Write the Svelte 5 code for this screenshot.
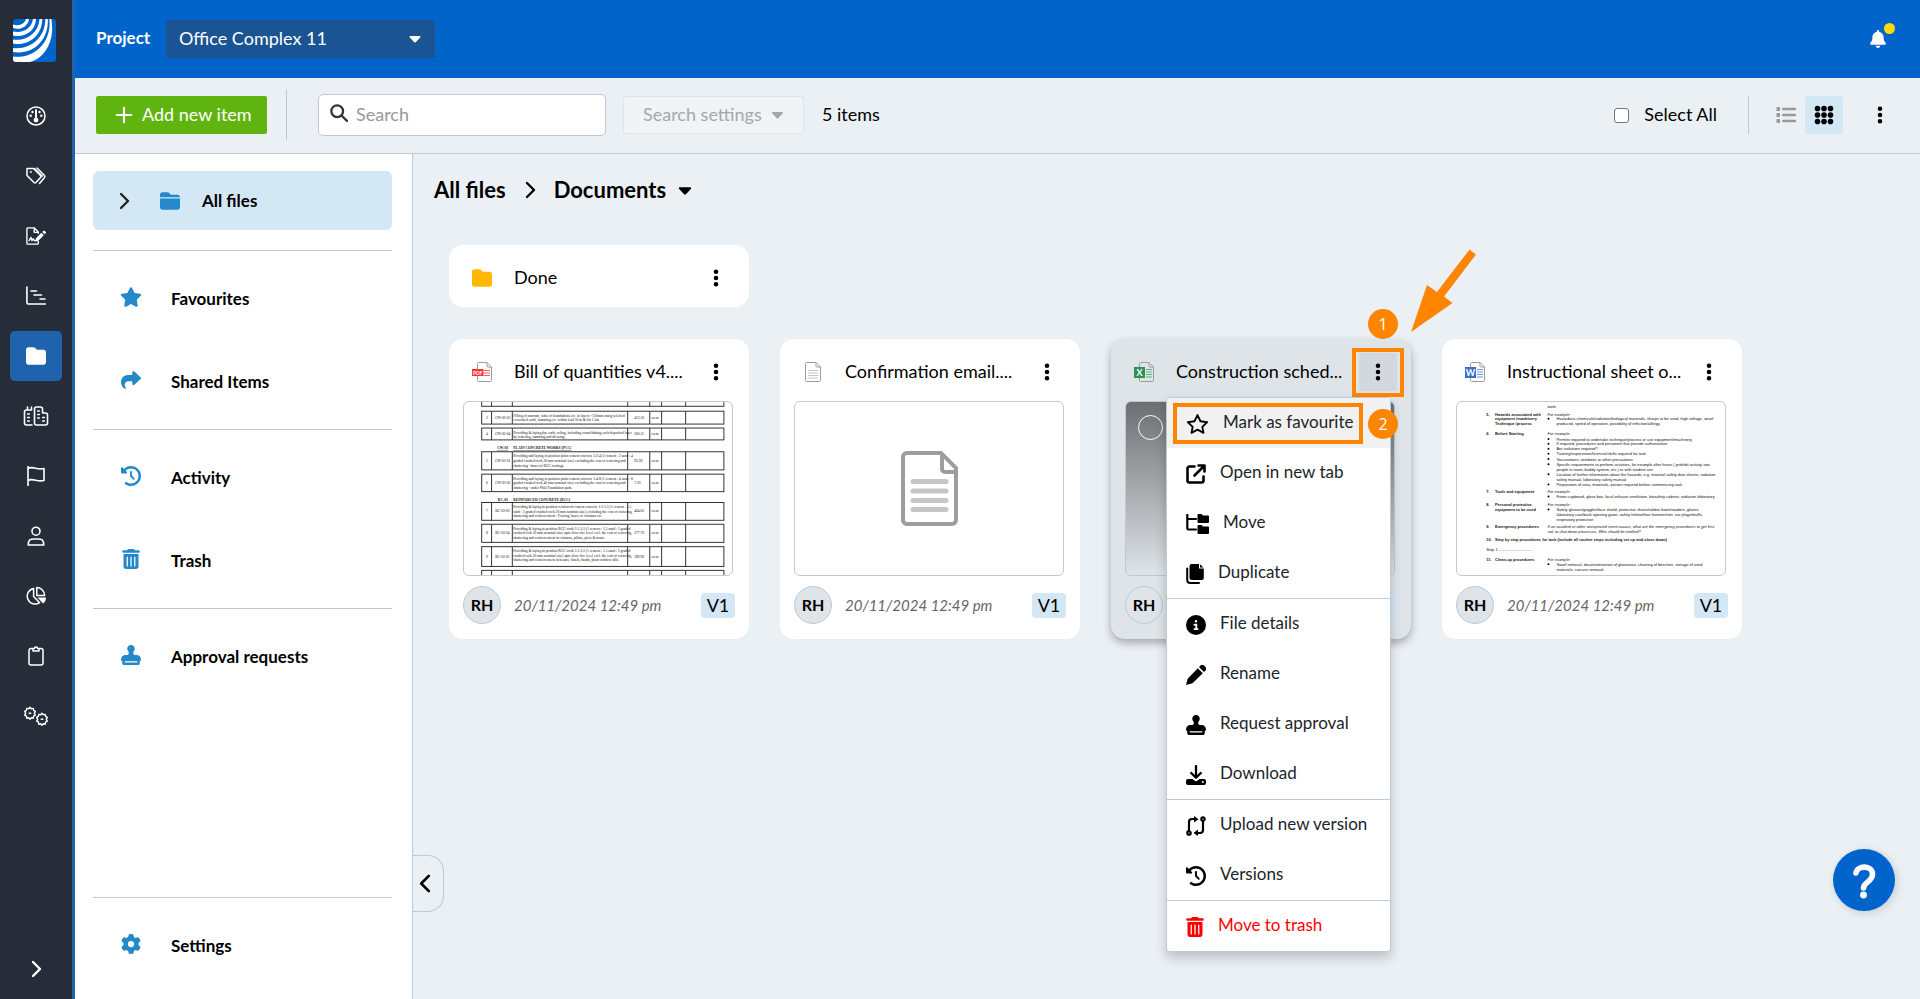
<script lang="ts">
  interface Icon {
    box: string;
    /** Filled outline. */
    fill?: string;
    /** Stroked outline. */
    line?: string;
    weight?: number;
  }

  const trash =
    "M135.2 17.7L128 32H32C14.3 32 0 46.3 0 64S14.3 96 32 96H416c17.7 0 32-14.3 32-32s-14.3-32-32-32H320l-7.2-14.3C307.4 6.8 296.3 0 284.2 0H163.8c-12.1 0-23.2 6.8-28.6 17.7zM416 128H32V448c0 35.3 28.7 64 64 64H352c35.3 0 64-28.7 64-64V128zM144 208V432c0 8.8-7.2 16-16 16s-16-7.2-16-16V208c0-8.8 7.2-16 16-16s16 7.2 16 16zm96 0V432c0 8.8-7.2 16-16 16s-16-7.2-16-16V208c0-8.8 7.2-16 16-16s16 7.2 16 16zm96 0V432c0 8.8-7.2 16-16 16s-16-7.2-16-16V208c0-8.8 7.2-16 16-16s16 7.2 16 16z";

  const icons: Record<string, Icon> = {
    gauge: {
      box: "0 0 20 20",
      line: "M10 1a9 9 0 1 1 0 18a9 9 0 0 1 0-18M10 4v9",
      weight: 1.5,
      fill: "M10 11.6a2.4 2.4 0 1 1 0 4.800a2.400 2.400 0 0 1 0-4.800zM9.100 3.500h1.800v9H9.100zM6.500 4.800a1.200 1.200 0 1 1 0 2.400a1.200 1.200 0 0 1 0-2.400zM13.500 4.800a1.200 1.200 0 1 1 0 2.400a1.200 1.200 0 0 1 0-2.400zM4.700 8.600a1.200 1.200 0 1 1 0 2.400a1.200 1.200 0 0 1 0-2.400zM15.300 8.600a1.200 1.200 0 1 1 0 2.400a1.200 1.200 0 0 1 0-2.400z",
    },
    tags: {
      box: "0 0 20 20",
      line: "M1 2.500h6.500l7 7a1.500 1.500 0 0 1 0 2l-4.500 5a1.500 1.500 0 0 1-2 0L1 9.500zM11 2l7.300 7.200a2 2 0 0 1 0 2.600L13.500 17.500M4.500 5.900h.8M8.500 2.500l7.800 7.600",
      weight: 1.5,
    },
    sign: {
      box: "0 0 22 20",
      line: "M13.500 16v2a1 1 0 0 1-1 1H2a1 1 0 0 1-1-1V2a1 1 0 0 1 1-1h7l4.500 4.500V7M9 1v5h4M3.500 15l2-3.500l1 3.500l1.500-2l1 2h3",
      weight: 1.5,
      fill: "M11 12.500l6-6l2.600 2.600l-6 6l-3.400.8zM18 5.500l1-1a1.200 1.200 0 0 1 1.700 0l.9.9a1.200 1.200 0 0 1 0 1.700l-1 1z",
    },
    gantt: {
      box: "0 0 20 20",
      line: "M.9 1v15.500a1.500 1.500 0 0 0 1.500 1.500H20M5 5h5.500M8 9h7.500M14 13h5",
      weight: 1.6,
    },
    folder: {
      box: "0 0 512 512",
      fill: "M64 480H448c35.300 0 64-28.700 64-64V160c0-35.300-28.700-64-64-64H288c-10.100 0-19.600-4.700-25.600-12.800L243.200 57.600C231.100 41.500 212.100 32 192 32H64C28.700 32 0 60.700 0 96V416c0 35.300 28.700 64 64 64z",
    },
    folderOpen: {
      box: "0 0 512 512",
      fill: "M0 160V96c0-35.300 28.700-64 64-64h128c20 0 39 9.500 51 25.600l19 25.600c6 8.100 15.500 12.800 25.600 12.800H448c35 0 64 28 64 64zM0 192H512V416c0 35-29 64-64 64H64c-35 0-64-29-64-64z",
    },
    city: {
      box: "0 0 25 20",
      line: "M8.500 19H3a2 2 0 0 1-2-2V6a2 2 0 0 1 2-2h5M4 4V1M8 4V1M11 17V3a2 2 0 0 1 2-2h4a2 2 0 0 1 2 2v4h3a2 2 0 0 1 2 2v8a2 2 0 0 1-2 2h-9a2 2 0 0 1-2-2zM4.200 8h1.600M4.200 11.500h1.600M4.200 15h1.600M14.200 5h1.600M14.200 8.500h1.600M14.200 12h1.600M19.200 11.500h1.600M19.200 15h1.600",
      weight: 1.6,
    },
    flag: {
      box: "0 0 20 20",
      line: "M2 0v20M2 2.500c5-3 9 2 16 0v12c-7 2-11-3-16 0",
      weight: 1.6,
    },
    person: {
      box: "0 0 20 20",
      line: "M10 1.200a4 4 0 1 1 0 8a4 4 0 0 1 0-8zM2.200 19c0-7 4-6 7.800-6s7.800-1 7.800 6z",
      weight: 1.6,
    },
    pie: {
      box: "0 0 21 20",
      line: "M8 2a8.300 8.300 0 1 0 6.300 15L8 10.500zM11.300 1v8.500h8.200c0-5-4-8.500-8.200-8.500z",
      weight: 1.6,
      fill: "M12 11.500h9c0 3-1.500 5-3 6.500z",
    },
    clipboard: {
      box: "0 0 20 20",
      line: "M7 2.500H5a2 2 0 0 0-2 2V17a2 2 0 0 0 2 2h10a2 2 0 0 0 2-2V4.500a2 2 0 0 0-2-2h-2M7 5V2.500h1.500a1.500 1.500 0 0 1 3 0H13V5z",
      weight: 1.5,
    },
    cogs: {
      box: "0 0 25 20",
      line: "M6.500 1.200l1.300 1.600l2-.4l.3 2l1.700 1l-1 1.900l1 1.900l-1.700 1l-.3 2l-2-.4l-1.300 1.600l-1.300-1.600l-2 .4l-.3-2l-1.700-1l1-1.900l-1-1.900l1.700-1l.3-2l2 .4zM18.500 7.200l1.300 1.600l2-.4l.3 2l1.700 1l-1 1.900l1 1.900l-1.700 1l-.3 2l-2-.4l-1.300 1.600l-1.300-1.600l-2 .4l-.3-2l-1.700-1l1-1.900l-1-1.900l1.700-1l.3-2l2 .4zM5.700 7.300h1.600M17.700 13.300h1.600",
      weight: 1.400,
    },
    right: { box: "0 0 20 20", line: "M7 3l7 7l-7 7", weight: 2.400 },
    left: { box: "0 0 20 20", line: "M14 2L6 10l8 8", weight: 2.800 },
    down: { box: "0 0 12 8", fill: "M1.500 1h9c.9 0 1.300 1 .7 1.600L7 7a1.400 1.400 0 0 1-2 0L.8 2.600C.2 2 .6 1 1.500 1z" },
    plus: { box: "0 0 20 20", line: "M10 2v16M2 10h16", weight: 2.400 },
    search: { box: "0 0 20 20", line: "M8 1.500a6.500 6.500 0 1 1 0 13a6.500 6.500 0 0 1 0-13M12.800 12.800L18.800 18.800", weight: 2.500 },
    bell: {
      box: "0 0 448 512",
      fill: "M224 0c-17.700 0-32 14.300-32 32V51.200C119 66 64 130.600 64 208v18.800c0 47-17.300 92.400-48.500 127.600l-7.400 8.300c-8.400 9.400-10.400 22.900-5.300 34.400S19.400 416 32 416H416c12.600 0 24-7.400 29.200-18.900s3.100-25-5.300-34.400l-7.400-8.300C401.300 319.200 384 273.900 384 226.800V208c0-77.400-55-142-128-156.800V32c0-17.700-14.300-32-32-32zm45.300 493.300c12-12 18.700-28.300 18.700-45.300H160c0 17 6.700 33.300 18.700 45.300s28.300 18.700 45.300 18.700s33.300-6.700 45.300-18.700z",
    },
    list: {
      box: "0 0 20 20",
      line: "M7.200 4H19M7.200 10H19M7.200 16H19",
      weight: 2.400,
      fill: "M1 2h2.500a.5.5 0 0 1 .5.5v3a.5.5 0 0 1-.5.5H1a.5.5 0 0 1-.5-.5v-3A.5.5 0 0 1 1 2zM1 8h2.500a.5.5 0 0 1 .5.5v3a.5.5 0 0 1-.5.5H1a.5.5 0 0 1-.5-.5v-3A.5.5 0 0 1 1 8zM1 14h2.500a.5.5 0 0 1 .5.5v3a.5.5 0 0 1-.5.5H1a.5.5 0 0 1-.5-.5v-3A.5.5 0 0 1 1 14z",
    },
    grid: {
      box: "0 0 20 20",
      line: "M3.500 3.500v.01M10 3.500v.01M16.500 3.500v.01M3.500 10v.01M10 10v.01M16.500 10v.01M3.500 16.500v.01M10 16.500v.01M16.500 16.500v.01",
      weight: 5.600,
    },
    kebab: { box: "0 0 20 20", line: "M10 3.800v.01M10 10v.01M10 16.200v.01", weight: 4.600 },
    star: {
      box: "0 0 576 512",
      fill: "M316.900 18C311.600 7 300.400 0 288.100 0s-23.400 7-28.800 18L195 150.300 51.400 171.500c-12 1.800-22 10.200-25.700 21.700s-.7 24.200 7.900 32.700L137.800 329 113.200 474.700c-2 12 3 24.200 12.900 31.300s23 8 33.800 2.300l128.300-68.500 128.300 68.500c10.800 5.700 23.900 4.900 33.800-2.300s14.900-19.300 12.900-31.300L438.500 329 542.700 225.900c8.600-8.500 11.700-21.200 7.900-32.700s-13.700-19.900-25.700-21.700L381.200 150.300 316.900 18z",
    },
    starLine: {
      box: "0 0 576 512",
      line: "M288 28l77 157 171 25-124 121 29 152-153-81-153 81 29-152L40 210l171-25z",
      weight: 48,
    },
    share: {
      box: "0 0 512 512",
      fill: "M307 34.800c-11.500 5.100-19 16.600-19 29.200v64H176C78.800 128 0 206.800 0 304C0 417.300 81.500 467.900 100.200 478.100c2.500 1.400 5.300 1.900 8.100 1.900c10.900 0 19.700-8.900 19.700-19.700c0-7.500-4.300-14.400-9.800-19.500C108.800 431.900 96 414.400 96 384c0-53 43-96 96-96h96v64c0 12.600 7.400 24.100 19 29.200s25 3 34.400-5.400l160-144c6.700-6.100 10.600-14.700 10.600-23.800s-3.800-17.700-10.600-23.800l-160-144c-9.400-8.500-22.900-10.600-34.400-5.400z",
    },
    history: {
      box: "0 0 512 512",
      fill: "M75 75L41 41C25.900 25.900 0 36.600 0 57.900V168c0 13.300 10.700 24 24 24H134.100c21.400 0 32.100-25.900 17-41l-30.800-30.800C155 85.500 203 64 256 64c106 0 192 86 192 192s-86 192-192 192c-40.800 0-78.600-12.700-109.700-34.400c-14.500-10.100-34.400-6.600-44.600 7.900s-6.600 34.400 7.900 44.600C151.200 495 201.700 512 256 512c141.400 0 256-114.600 256-256S397.400 0 256 0C185.300 0 121.300 28.700 75 75zm181 53c-13.300 0-24 10.700-24 24V256c0 6.400 2.500 12.500 7 17l72 72c9.400 9.400 24.600 9.400 33.900 0s9.400-24.600 0-33.900l-65-65V152c0-13.300-10.700-24-24-24z",
    },
    trash: { box: "0 0 448 512", fill: trash },
    stamp: {
      box: "0 0 512 512",
      fill: "M312 201.800c0-17.400 9.200-33.200 19.900-47C344.500 138.500 352 118.100 352 96c0-53-43-96-96-96s-96 43-96 96c0 22.100 7.500 42.500 20.100 58.800c10.700 13.800 19.900 29.600 19.900 47c0 29.900-24.300 54.200-54.200 54.200H112C50.100 256 0 306.100 0 368c0 20.900 13.400 38.700 32 45.300V464c0 26.500 21.500 48 48 48H432c26.500 0 48-21.500 48-48V413.300c18.600-6.600 32-24.400 32-45.300c0-61.900-50.100-112-112-112H366.200c-29.900 0-54.200-24.300-54.200-54.200zM416 416v32H96V416H416z",
    },
    gear: {
      box: "0 0 512 512",
      fill: "M495.900 166.600c3.200 8.700.5 18.400-6.400 24.600l-43.300 39.400c1.100 8.300 1.700 16.800 1.700 25.400s-.6 17.100-1.700 25.400l43.300 39.400c6.900 6.200 9.600 15.900 6.400 24.600c-4.400 11.900-9.700 23.300-15.800 34.300l-4.700 8.100c-6.600 11-14 21.400-22.100 31.200c-5.900 7.200-15.700 9.600-24.500 6.800l-55.700-17.700c-13.400 10.300-28.200 18.900-44 25.400l-12.500 57.100c-2 9.100-9 16.300-18.200 17.800c-13.800 2.300-28 3.500-42.500 3.500s-28.700-1.200-42.500-3.500c-9.200-1.500-16.200-8.700-18.200-17.800l-12.500-57.100c-15.800-6.500-30.600-15.100-44-25.400L83.100 425.900c-8.800 2.800-18.600.3-24.500-6.800c-8.100-9.800-15.500-20.200-22.100-31.200l-4.700-8.100c-6.100-11-11.400-22.400-15.800-34.300c-3.200-8.700-.5-18.400 6.400-24.600l43.300-39.400C64.600 273.100 64 264.600 64 256s.6-17.100 1.700-25.400L22.400 191.200c-6.900-6.200-9.600-15.900-6.400-24.600c4.400-11.900 9.700-23.300 15.800-34.300l4.700-8.100c6.600-11 14-21.400 22.100-31.200c5.900-7.200 15.700-9.600 24.500-6.800l55.700 17.700c13.400-10.300 28.200-18.900 44-25.400l12.500-57.100c2-9.100 9-16.300 18.200-17.800C227.300 1.200 241.500 0 256 0s28.700 1.200 42.500 3.500c9.200 1.500 16.200 8.700 18.200 17.800l12.500 57.100c15.800 6.500 30.600 15.100 44 25.400l55.700-17.700c8.800-2.800 18.600-.3 24.500 6.800c8.100 9.800 15.500 20.200 22.100 31.200l4.700 8.100c6.100 11 11.400 22.400 15.800 34.300zM256 336a80 80 0 1 0 0-160 80 80 0 1 0 0 160z",
    },
    newTab: {
      box: "0 0 20 20",
      line: "M8.500 2.500H3.500a2 2 0 0 0-2 2v12a2 2 0 0 0 2 2h12a2 2 0 0 0 2-2v-4M12.500 1.500h6v6M18 2L8.500 11.500",
      weight: 2.600,
    },
    tree: {
      box: "0 0 23 20",
      line: "M1.300 1v13.500a1 1 0 0 0 1 1H10M1.300 5H10",
      weight: 2.200,
      fill: "M11.500 1a1 1 0 0 1 1-1h3l1.500 1.500h5a1 1 0 0 1 1 1V8a1 1 0 0 1-1 1h-9.500a1 1 0 0 1-1-1zM11.500 12a1 1 0 0 1 1-1h3l1.500 1.500h5a1 1 0 0 1 1 1V19a1 1 0 0 1-1 1h-9.500a1 1 0 0 1-1-1z",
    },
    copy: {
      box: "0 0 18 20",
      line: "M1.200 4.500V16a3 3 0 0 0 3 3H13",
      weight: 2,
      fill: "M5.500 0H13v4.500h4.800V14a2 2 0 0 1-2 2H6a2.500 2.500 0 0 1-2.500-2.500V2a2 2 0 0 1 2-2zM14 .2L17.500 3.500H14z",
    },
    info: {
      box: "0 0 512 512",
      fill: "M256 512A256 256 0 1 0 256 0a256 256 0 1 0 0 512zM216 336h24V272H216c-13.300 0-24-10.700-24-24s10.700-24 24-24h48c13.300 0 24 10.700 24 24v88h8c13.300 0 24 10.700 24 24s-10.700 24-24 24H216c-13.300 0-24-10.700-24-24s10.700-24 24-24zm40-208a32 32 0 1 1 0 64 32 32 0 1 1 0-64z",
    },
    pencil: {
      box: "0 0 20 20",
      fill: "M11.800 3.200l5 5L6.500 18.200 0 20l1.800-6.500zM13 2l1.300-1.200a2.800 2.800 0 0 1 4 0l.9.9a2.800 2.800 0 0 1 0 4L18 7z",
    },
    download: {
      box: "0 0 20 20",
      line: "M10 1v11M5.200 8l4.800 4.800L14.800 8",
      weight: 2.300,
      fill: "M2 14h4.500l2 1.600a2.400 2.400 0 0 0 3 0l2-1.600H18a2 2 0 0 1 2 2v2a2 2 0 0 1-2 2H2a2 2 0 0 1-2-2v-2a2 2 0 0 1 2-2zM16.800 16a1 1 0 1 0 0 2a1 1 0 1 0 0-2z",
    },
    compare: {
      box: "0 0 20 20",
      line: "M3 15V6a3 3 0 0 1 3-3h3M17 5v9a3 3 0 0 1-3 3h-3M3 15.200a1.700 1.700 0 1 1 0 3.400a1.700 1.700 0 0 1 0-3.400zM17 1.400a1.700 1.700 0 1 1 0 3.400a1.700 1.700 0 0 1 0-3.400z",
      weight: 2.200,
      fill: "M8 0l4.500 3.200L8 6.500zM12 13.500V20l-4.500-3z",
    },
  };

  const rail = [
    { icon: "gauge", label: "Dashboard" },
    { icon: "tags", label: "Tags" },
    { icon: "sign", label: "Forms" },
    { icon: "gantt", label: "Programme" },
    { icon: "folder", label: "Documents" },
    { icon: "city", label: "Sites" },
    { icon: "flag", label: "Flags" },
    { icon: "person", label: "People" },
    { icon: "pie", label: "Reports" },
    { icon: "clipboard", label: "Tasks" },
    { icon: "cogs", label: "Administration" },
  ];

  const places = [
    [
      { icon: "star", label: "Favourites" },
      { icon: "share", label: "Shared Items" },
    ],
    [
      { icon: "history", label: "Activity" },
      { icon: "trash", label: "Trash" },
    ],
    [{ icon: "stamp", label: "Approval requests" }],
  ];

  const files = [
    { kind: "pdf", name: "Bill of quantities v4...." },
    { kind: "txt", name: "Confirmation email...." },
    { kind: "xls", name: "Construction sched..." },
    { kind: "doc", name: "Instructional sheet o..." },
  ];

  const menu = [
    [
      { icon: "starLine", label: "Mark as favourite", width: 23 },
      { icon: "newTab", label: "Open in new tab", width: 20 },
      { icon: "tree", label: "Move", width: 23 },
      { icon: "copy", label: "Duplicate", width: 18 },
    ],
    [
      { icon: "info", label: "File details", width: 20 },
      { icon: "pencil", label: "Rename", width: 20 },
      { icon: "stamp", label: "Request approval", width: 20 },
      { icon: "download", label: "Download", width: 20 },
    ],
    [
      { icon: "compare", label: "Upload new version", width: 20 },
      { icon: "history", label: "Versions", width: 20 },
    ],
    [{ icon: "trash", label: "Move to trash", width: 18 }],
  ];

  // Preview of the bill of quantities: [top, height, no, code, lines, qty]
  const billRows: [number, number, string, string, string[], string][] = [
    [-20, 33, "", "", [], ""],
    [28, 39, "3", "CW-02-03", ["Filling of murram, sides of foundations etc. in layers <150mm using selected", "excavated earth, ramming etc. within lead 50 m & lift 1.5m"], "453.50"],
    [79, 36, "4", "CW-02-04", ["Providing & laying dry earth, soling, including consolidating each deposited layer", "by watering, ramming and dressing."], "260.15"],
    [151, 55, "5", "CW-03-01", ["Providing and laying in position plain cement concrete 1:2:4 (1 cement : 2 sand : 4", "graded crushed rock 20 mm nominal size) excluding the cost of centering and", "shuttering - bases of RCC footings."], "93.28"],
    [219, 53, "6", "CW-03-02", ["Providing and laying in position plain cement concrete 1:4:8 (1 cement : 4 sand : 8", "graded crushed rock 40 mm nominal size) excluding the cost of centering and", "shuttering - under Wall Foundation pads."], "7.20"],
    [305, 54, "7", "RC-03-03", ["Providing & laying in position reinforced cement concrete 1:1.5:3 (1 cement : 1.5", "sand : 3 graded crushed rock 20 mm nominal size) excluding the cost of centering,", "shuttering and reinforcement - Footing, bases of columns etc."], "464.05"],
    [371, 55, "8", "RC-03-04", ["Providing & laying in position RCC work 1:1.5:3 (1 cement : 1.5 sand : 3 graded", "crushed rock 20 mm nominal size) upto floor five level excl. the cost of centering,", "shuttering and reinforcement in columns, pillars, piers & struts."], "277.70"],
    [439, 60, "9", "RC-03-05", ["Providing & laying in position RCC work 1:1.5:3 (1 cement : 1.5 sand : 3 graded", "crushed rock 20 mm nominal size) upto floor five level excl. the cost of centering,", "shuttering and reinforcement in beams, lintels, bands, plain window sills."], "389.90"],
    [511, 40, "", "", [], ""],
  ];

  // Preview of the instruction sheet: [x, baseline, text, style]
  const sheetLines: [number, number, string, string?][] = [
    [273, 17, "work."],
    [87, 41, "5.", "b"], [114, 41, "Hazards associated with", "b"], [114, 56, "equipment /machinery", "b"], [114, 71, "Technique /process", "b"],
    [273, 41, "For example:", "i"],
    [300, 56, "Hazardous chemicals/radiation/biological materials, sharps to be used, high voltage, swarf"],
    [300, 71, "produced, speed of operation, possibility of infection/allergy."],
    [87, 101, "6.", "b"], [114, 101, "Before Starting", "b"], [273, 101, "For example:", "i"],
    [300, 117, "Permits required to undertake technique/process or use equipment/machinery"],
    [300, 132, "If required, procedures and personnel that provide authorisation"],
    [300, 147, "Are isolations required?"],
    [300, 162, "Training/supervision/licences/skills required for task"],
    [300, 178, "Vaccinations, antidotes or other precautions"],
    [300, 194, "Specific requirements to perform activities, for example after hours ( prohibit activity, two"],
    [300, 209, "people in room, buddy system, etc.) or with student use"],
    [300, 224, "Location of further information about the hazards, e.g. material safety data sheets, radiation"],
    [300, 239, "safety manual, laboratory safety manual"],
    [300, 255, "Preparation of area, materials, person required before commencing task"],
    [87, 277, "7.", "b"], [114, 277, "Tools and equipment", "b"], [273, 277, "For example:", "i"],
    [300, 292, "Fume cupboard, glove box, local exhaust ventilation, biosafety cabinet, radiation laboratory"],
    [87, 315, "8.", "b"], [114, 315, "Personal protective", "b"], [114, 331, "equipment to be used", "b"], [273, 315, "For example:", "i"],
    [300, 331, "Safety glasses/goggles/face shield, protective shoes/rubber boots/waders, gloves,"],
    [300, 345, "laboratory coat/back opening gown, safety helmet/hair fastener/net, ear plugs/muffs,"],
    [300, 361, "respiratory protection"],
    [87, 383, "9.", "b"], [114, 383, "Emergency procedures", "b"],
    [273, 383, "If an accident or other unexpected event occurs, what are the emergency procedures to get first", "i"],
    [273, 398, "aid, to shut down processes, Who should be notified?", "i"],
    [87, 422, "10.", "b"], [114, 422, "Step by step procedures for task (include all routine steps including set up and close down)", "b"],
    [87, 452, "Step 1 ..............................."],
    [87, 483, "11.", "b"], [114, 483, "Clean-up procedures", "b"], [273, 483, "For example:", "i"],
    [300, 497, "Swarf removal, decontamination of glassware, cleaning of benches, storage of used"],
    [300, 513, "materials, carcass removal."],
  ];

  const bullets = [56, 117, 132, 147, 162, 178, 194, 224, 255, 292, 331, 497];

  let query = $state("");
  let project = $state("Office Complex 11");
</script>

{#snippet glyph(name: string)}
  {@const icon = icons[name]}
  <svg viewBox={icon.box} aria-hidden="true">
    {#if icon.fill}
      <path d={icon.fill} fill="currentColor" fill-rule="evenodd" />
    {/if}
    {#if icon.line}
      <path
        d={icon.line}
        fill="none"
        stroke="currentColor"
        stroke-width={icon.weight}
        stroke-linecap="round"
        stroke-linejoin="round"
      />
    {/if}
  </svg>
{/snippet}

{#snippet fileType(kind: string)}
  {#if kind === "txt"}
    <svg viewBox="0 0 20 20" aria-hidden="true">
      <path d="M13 .5H3.500a1 1 0 0 0-1 1v17a1 1 0 0 0 1 1h13a1 1 0 0 0 1-1V5zM13 .5V4a1 1 0 0 0 1 1h3.500" fill="#fff" stroke="#9d9d9b" />
      <path d="M5 8.500h10M5 11h10M5 13.500h10M5 16h10" stroke="#c6c6c5" />
    </svg>
  {:else}
    <svg viewBox="0 0 20 20" aria-hidden="true">
      <path
        d="M15 .5H6.500a1 1 0 0 0-1 1v17a1 1 0 0 0 1 1h12a1 1 0 0 0 1-1V5zM15 .5V4a1 1 0 0 0 1 1h3.500"
        fill={kind === "xls" ? "none" : "#fff"}
        stroke="#9d9d9b"
      />
      {#if kind === "pdf"}
        <path d="M12 8.500h6M12 11h6M12 13.500h6" stroke="#ff5c5c" />
        <rect y="7" width="11.500" height="7" fill="#ff3333" />
        <text class="tag tag--pdf" x="5.800" y="12.500">PDF</text>
      {:else if kind === "xls"}
        <path d="M12 7.500h6M12 10h6M12 12.500h6M12 15h6" stroke="#5fb382" />
        <rect y="5" width="11" height="11" fill="#2f8f57" />
        <text class="tag" x="5.500" y="13.500">X</text>
      {:else}
        <path d="M12 7.500h6M12 10h6M12 12.500h6M12 15h6" stroke="#5b9be0" />
        <rect y="5" width="11" height="11" fill="#3771c8" />
        <text class="tag" x="5.500" y="13.500">W</text>
      {/if}
    </svg>
  {/if}
{/snippet}

{#snippet preview(kind: string)}
  {#if kind === "pdf"}
    <svg class="sheet" viewBox="0 0 810 525" aria-hidden="true">
      <text class="bill bill--head" x="99" y="144">CW-03</text>
      <text class="bill bill--head" x="148" y="144">PLAIN CONCRETE WORKS (PCC)</text>
      <text class="bill bill--head" x="101" y="301">RC-03</text>
      <text class="bill bill--head" x="148" y="301">REINFORCED CONCRETE (RCC)</text>
      {#each billRows as [top, height, no, code, lines, qty]}
        <rect x="52" y={top} width="735" height={height} fill="none" stroke="#333" stroke-width="3" />
        <path d="M82 {top}v{height}M145 {top}v{height}M495 {top}v{height}M562 {top}v{height}M598 {top}v{height}M671 {top}v{height}" stroke="#333" stroke-width="3" />
        <text class="bill" x="65" y={top + height / 2 + 3}>{no}</text>
        <text class="bill" x="93" y={top + height / 2 + 3}>{code}</text>
        {#each lines as line, i}
          <text class="bill" x="148" y={top + 17 + i * 14}>{line}</text>
        {/each}
        <text class="bill" x="515" y={top + height / 2 + 3}>{qty}</text>
        {#if qty}
          <text class="bill" x="567" y={top + height / 2 + 3}>cu.m</text>
        {/if}
      {/each}
    </svg>
  {:else if kind === "txt"}
    <svg class="big-doc" viewBox="0 0 57 75" aria-hidden="true">
      <path d="M40 2H6a4 4 0 0 0-4 4v63a4 4 0 0 0 4 4h45a4 4 0 0 0 4-4V17zM41 3v15a3 3 0 0 0 3 3h11" fill="none" stroke="#9d9d9b" stroke-width="4" />
      <path d="M12 30.500h33M12 40h33M12 49.500h33M12 58.500h33" stroke="#c6c6c5" stroke-width="5" stroke-linecap="round" />
    </svg>
  {:else if kind === "doc"}
    <svg class="sheet" viewBox="0 0 810 525" aria-hidden="true">
      {#each sheetLines as [x, y, text, style]}
        <text class="line" class:line--bold={style === "b"} class:line--italic={style === "i"} {x} {y}>{text}</text>
      {/each}
      {#each bullets as y}
        <circle cx="276" cy={y - 5} r="3" />
      {/each}
    </svg>
  {/if}
{/snippet}

<div class="app">
  <nav class="rail" aria-label="Main">
    <a class="logo" href="#home" aria-label="Home">
      <svg viewBox="0 0 43 43" aria-hidden="true">
        <defs>
          <clipPath id="logo-clip"><rect width="43" height="43" rx="3" /></clipPath>
        </defs>
        <g clip-path="url(#logo-clip)">
          <rect width="43" height="43" fill="#0064cb" />
          <g fill="#fff">
            <path d="M0 5.500C6 7.500 11.500 5 13 0H16C15 8 7 11.500 0 9z" />
            <path d="M0 12.500C10 14.500 18.500 9.500 20 0H23C22.500 12 12 19 0 16.500z" />
            <path d="M0 20.500C14 22.500 25.500 13.500 26.500 0H29.200C29.200 17 15 27.500 0 24.500z" />
            <path d="M0 29C18 31 32.500 18 32.300 0H34.800C36 21 20 36.500 0 33z" />
            <path d="M0 37.500C22 40 39 22.500 36.300 0H38.300C43 25 28 43.500 12 43.500L0 43z" />
          </g>
        </g>
      </svg>
    </a>
    <ul class="rail__list">
      {#each rail as item}
        <li>
          <a
            class="rail__link"
            class:rail__link--active={item.icon === "folder"}
            class:rail__link--wide={item.icon === "city" || item.icon === "cogs"}
            href="#{item.icon}"
            aria-label={item.label}
          >
            {@render glyph(item.icon)}
          </a>
        </li>
      {/each}
    </ul>
    <button class="rail__expand" type="button" aria-label="Expand navigation">{@render glyph("right")}</button>
  </nav>

  <div class="page">
    <header class="header">
      <label class="header__label" for="project">Project</label>
      <div class="project">
        <select id="project" bind:value={project}>
          <option>Office Complex 11</option>
        </select>
        <span class="project__caret">{@render glyph("down")}</span>
      </div>
      <button class="bell" type="button" aria-label="Notifications">
        {@render glyph("bell")}
        <span class="bell__dot"></span>
      </button>
    </header>

    <div class="toolbar">
      <button class="add" type="button">
        <span class="add__icon">{@render glyph("plus")}</span>
        Add new item
      </button>
      <span class="toolbar__rule toolbar__rule--tall"></span>
      <div class="search">
        <span class="search__icon">{@render glyph("search")}</span>
        <input type="search" placeholder="Search" aria-label="Search" bind:value={query} />
      </div>
      <button class="settings" type="button" disabled>
        Search settings
        <span class="settings__caret">{@render glyph("down")}</span>
      </button>
      <span class="count">5 items</span>
      <div class="select-all">
        <input id="select-all" type="checkbox" />
        <label for="select-all">Select All</label>
      </div>
      <span class="toolbar__rule"></span>
      <div class="views">
        <button class="view view--off" type="button" aria-label="List view">{@render glyph("list")}</button>
        <button class="view view--on" type="button" aria-label="Grid view">{@render glyph("grid")}</button>
      </div>
      <button class="view" type="button" aria-label="More">{@render glyph("kebab")}</button>
    </div>

    <div class="body">
      <aside class="places">
        <a class="all-files" href="#all">
          <span class="all-files__chevron">{@render glyph("right")}</span>
          <span class="all-files__icon">{@render glyph("folderOpen")}</span>
          All files
        </a>
        {#each places as group}
          <div class="group">
            {#each group as place}
              <a class="place" href="#{place.icon}">
                <span class="place__icon">{@render glyph(place.icon)}</span>
                {place.label}
              </a>
            {/each}
          </div>
        {/each}
        <div class="group group--last">
          <a class="place" href="#settings">
            <span class="place__icon">{@render glyph("gear")}</span>
            Settings
          </a>
        </div>
        <button class="collapse" type="button" aria-label="Collapse panel">{@render glyph("left")}</button>
      </aside>

      <main class="content">
        <nav class="crumbs" aria-label="Breadcrumb">
          <a href="#all">All files</a>
          <span class="crumbs__sep">{@render glyph("right")}</span>
          <a href="#documents">Documents</a>
          <button class="crumbs__more" type="button" aria-label="Folder actions">{@render glyph("down")}</button>
        </nav>

        <div class="cards">
          <article class="card card--folder">
            <div class="card__head">
              <span class="card__type card__type--folder">{@render glyph("folder")}</span>
              <span class="card__name">Done</span>
              <button class="card__more" type="button" aria-label="Actions for Done">{@render glyph("kebab")}</button>
            </div>
          </article>
        </div>

        <div class="cards">
          {#each files as file}
            <article class="card" class:card--active={file.kind === "xls"}>
              <div class="card__head">
                <span class="card__type">{@render fileType(file.kind)}</span>
                <span class="card__name">{file.name}</span>
                <button class="card__more" type="button" aria-label="Actions for {file.name}">{@render glyph("kebab")}</button>
              </div>
              <div class="thumb">
                {@render preview(file.kind)}
                {#if file.kind === "xls"}
                  <span class="thumb__check"></span>
                {/if}
              </div>
              <div class="card__foot">
                <span class="avatar">RH</span>
                <span class="card__date">20/11/2024 12:49 pm</span>
                <span class="version">V1</span>
              </div>

              {#if file.kind === "xls"}
                <div class="menu" role="menu">
                  {#each menu as group}
                    <div class="menu__group">
                      {#each group as entry}
                        <button
                          class="menu__item"
                          class:menu__item--hover={entry.icon === "starLine"}
                          class:menu__item--danger={entry.icon === "trash"}
                          type="button"
                          role="menuitem"
                        >
                          <span class="menu__icon" style="width: {entry.width}px">{@render glyph(entry.icon)}</span>
                          {entry.label}
                        </button>
                      {/each}
                    </div>
                  {/each}
                  <span class="mark mark--item"></span>
                </div>
                <span class="mark mark--button"></span>
                <span class="step step--one">1</span>
                <span class="step step--two">2</span>
                <svg class="arrow" viewBox="0 0 66 84" aria-hidden="true">
                  <path d="M0 83L16 36l10 7L58.500 0.500L65 5.500L33 47.500L41.500 54z" fill="#ff8400" />
                </svg>
              {/if}
            </article>
          {/each}
        </div>
      </main>
    </div>
  </div>

  <button class="help" type="button" aria-label="Help">
    <svg viewBox="0 0 62 62" aria-hidden="true">
      <path d="M23 24c1-8 16.500-8 16.500 1c0 8-9 8-9 14" fill="none" stroke="#fff" stroke-width="5.600" stroke-linecap="round" />
      <circle cx="30.500" cy="46" r="3.400" fill="#fff" />
    </svg>
  </button>
</div>

<style>
  :global(body) {
    margin: 0;
    background: #ebf0f5;
  }

  .app {
    --line: #bccad8;
    --pale: #d4e7f5;
    --accent: #2389cb;
    display: flex;
    min-height: 100vh;
    color: #000;
    background: #ebf0f5;
    font-family: Lato, "Liberation Sans", sans-serif;
    font-size: 18px;
    line-height: 24px;
  }

  .app :global(svg) {
    display: block;
    width: 100%;
    height: 100%;
  }

  a {
    color: inherit;
    text-decoration: none;
  }

  button {
    padding: 0;
    border: 0;
    background: none;
    color: inherit;
    font: inherit;
    cursor: pointer;
  }

  /* Navigation rail */
  .rail {
    box-sizing: border-box;
    display: flex;
    flex: 0 0 75px;
    flex-direction: column;
    align-items: center;
    padding: 19px 0 20px;
    border-right: 3px solid #1f62ae;
    background: #262d39;
    color: #fff;
  }

  .logo {
    align-self: flex-start;
    width: 43px;
    height: 43px;
    margin: 0 0 29px 13px;
  }

  .rail__list {
    display: grid;
    gap: 10px;
    margin: 0;
    padding: 0;
    list-style: none;
  }

  .rail__link {
    box-sizing: border-box;
    display: block;
    width: 52px;
    height: 50px;
    padding: 15px 16px;
    border-radius: 5px;
  }

  .rail__link--wide {
    padding: 15px 13px;
  }

  .rail__link--active {
    background: #1f62ae;
  }

  .rail__expand {
    width: 20px;
    height: 20px;
    margin-top: auto;
  }

  .page {
    display: flex;
    flex: 1;
    flex-direction: column;
    min-width: 0;
  }

  /* Header */
  .header {
    box-sizing: border-box;
    display: flex;
    align-items: center;
    height: 78px;
    padding: 0 34px 0 21px;
    background: #0064cb;
    color: #fff;
  }

  .header__label {
    width: 70px;
    padding-bottom: 2px;
    font-size: 17px;
    font-weight: 700;
  }

  .project {
    position: relative;
    width: 269px;
  }

  .project select {
    display: block;
    width: 100%;
    height: 38px;
    padding: 0 30px 3px 13px;
    border: 0;
    border-radius: 2px;
    appearance: none;
    background: #1a5493;
    color: #fff;
    font: inherit;
  }

  .project__caret {
    position: absolute;
    top: 15px;
    right: 14px;
    width: 12px;
    height: 8px;
    pointer-events: none;
  }

  .bell {
    position: relative;
    width: 16px;
    height: 18px;
    margin-left: auto;
  }

  .bell__dot {
    position: absolute;
    top: -7px;
    right: -9px;
    width: 11px;
    height: 11px;
    border-radius: 50%;
    background: #ffdc00;
  }

  /* Toolbar */
  .toolbar {
    box-sizing: border-box;
    display: flex;
    align-items: center;
    height: 76px;
    padding: 0 21px 1px;
    border-bottom: 1px solid var(--line);
  }

  .add {
    display: flex;
    align-items: center;
    gap: 9px;
    width: 171px;
    height: 38px;
    padding: 0 19px 3px;
    box-sizing: border-box;
    border-radius: 2px;
    background: #5fb40f;
    color: #fff;
    white-space: nowrap;
  }

  .add__icon {
    flex: 0 0 18px;
    height: 18px;
    margin-top: 3px;
  }

  .toolbar__rule {
    width: 1px;
    height: 38px;
    background: var(--line);
  }

  .toolbar__rule--tall {
    height: 50px;
    margin: 0 31px 0 19px;
  }

  .search {
    box-sizing: border-box;
    display: flex;
    align-items: center;
    gap: 8px;
    width: 288px;
    height: 42px;
    margin-right: 17px;
    padding: 0 11px 2px;
    border: 1px solid var(--line);
    border-radius: 5px;
    background: #fff;
  }

  .search__icon {
    flex: 0 0 18px;
    height: 18px;
    margin-bottom: 2px;
    color: #333;
  }

  .search input {
    flex: 1;
    min-width: 0;
    padding: 0;
    border: 0;
    outline: none;
    background: none;
    font: inherit;
  }

  .search input::placeholder {
    color: #999;
  }

  .settings {
    box-sizing: border-box;
    display: flex;
    align-items: center;
    justify-content: space-between;
    width: 181px;
    height: 38px;
    padding: 0 19px 3px;
    border: 1px solid #dfe5eb;
    border-radius: 2px;
    background: #f0f4f7;
    color: #a4a8ab;
    white-space: nowrap;
  }

  .settings__caret {
    width: 13px;
    height: 8px;
    margin-top: 3px;
  }

  .count {
    margin-left: 18px;
    padding-bottom: 2px;
  }

  .select-all {
    display: flex;
    align-items: center;
    gap: 15px;
    margin-right: 31px;
    margin-left: auto;
  }

  .select-all label {
    padding-bottom: 2px;
  }

  .select-all input {
    box-sizing: border-box;
    width: 15px;
    height: 15px;
    margin: 0;
    border: 1px solid #767676;
    border-radius: 3px;
    appearance: none;
    background: #fff;
  }

  .select-all input:checked {
    background: #0064cb;
  }

  .views {
    display: flex;
    margin: 0 18px;
  }

  .view {
    box-sizing: border-box;
    width: 38px;
    height: 38px;
    padding: 9px;
    border-radius: 3px;
  }

  .view--on {
    background: var(--pale);
  }

  .view--off {
    color: #999;
  }

  /* Side panel */
  .body {
    display: flex;
    flex: 1;
  }

  .places {
    position: relative;
    box-sizing: border-box;
    display: flex;
    flex: 0 0 338px;
    flex-direction: column;
    padding: 17px 20px 6px 18px;
    border-right: 1px solid var(--line);
    background: #fff;
    font-size: 17px;
    font-weight: 700;
  }

  .all-files {
    display: flex;
    align-items: center;
    height: 59px;
    margin-bottom: 20px;
    padding-left: 21px;
    border-radius: 6px;
    background: var(--pale);
  }

  .all-files__chevron {
    width: 20px;
    height: 20px;
    margin-right: 26px;
    color: #222;
  }

  .all-files__icon {
    width: 20px;
    height: 20px;
    margin-right: 22px;
    color: var(--accent);
  }

  .group {
    padding: 6px 0;
    border-top: 1px solid var(--line);
  }

  .group--last {
    margin-top: auto;
  }

  .place {
    display: flex;
    align-items: center;
    gap: 29px;
    height: 83px;
    padding-left: 27px;
  }

  .place__icon {
    width: 22px;
    height: 20px;
    margin-bottom: 3px;
    color: var(--accent);
  }

  .collapse {
    position: absolute;
    bottom: 87px;
    left: 100%;
    box-sizing: border-box;
    width: 32px;
    height: 57px;
    padding: 18px 7px 18px 2px;
    border: 1px solid var(--line);
    border-left: 0;
    border-radius: 0 16px 16px 0;
  }

  /* Content */
  .content {
    flex: 1;
    min-width: 0;
  }

  .crumbs {
    display: flex;
    align-items: center;
    height: 72px;
    padding-left: 21px;
    font-size: 22px;
    font-weight: 700;
  }

  .crumbs__sep {
    width: 20px;
    height: 20px;
    margin: 0 14px;
  }

  .crumbs__more {
    width: 14px;
    height: 9px;
    margin-left: 12px;
  }

  .cards {
    display: flex;
    flex-wrap: wrap;
    gap: 31px;
    padding: 19px 36px 13px;
  }

  .card {
    position: relative;
    box-sizing: border-box;
    width: 300px;
    padding: 0 14px 15px;
    border-radius: 14px;
    background: #fff;
  }

  .card--folder {
    padding-bottom: 0;
  }

  .card--active {
    background: #dfe4e8;
    box-shadow: 0 4px 8px rgba(0, 0, 0, 0.3);
  }

  .card__head {
    box-sizing: border-box;
    display: flex;
    align-items: center;
    height: 62px;
    padding: 4px 0 0 9px;
  }

  .card__type {
    width: 20px;
    height: 20px;
    margin-right: 22px;
  }

  .card__type--folder {
    color: #ffb800;
  }

  .card__name {
    flex: 1;
    padding-bottom: 2px;
    white-space: nowrap;
  }

  .card__more {
    box-sizing: border-box;
    width: 38px;
    height: 38px;
    padding: 9px;
    border-radius: 3px;
  }

  .card--active .card__more {
    background: #d3d8de;
  }

  .thumb {
    position: relative;
    box-sizing: border-box;
    display: flex;
    align-items: center;
    justify-content: center;
    height: 175px;
    margin-right: 2px;
    overflow: hidden;
    border: 1px solid var(--line);
    border-radius: 6px;
    background: #fff;
  }

  .card--active .thumb {
    background: linear-gradient(#6c6f72, #dfe4e8);
  }

  .thumb__check {
    position: absolute;
    top: 13px;
    left: 12px;
    box-sizing: border-box;
    width: 25px;
    height: 25px;
    border: 1px solid #fff;
    border-radius: 50%;
  }

  .thumb .big-doc {
    width: 57px;
    height: 75px;
  }

  .card__foot {
    display: flex;
    align-items: center;
    height: 38px;
    margin-top: 10px;
  }

  .avatar {
    box-sizing: border-box;
    width: 38px;
    height: 38px;
    margin-right: 13px;
    border: 1px solid var(--line);
    border-radius: 50%;
    background: #dfe4e8;
    font-size: 16px;
    font-weight: 700;
    line-height: 35px;
    text-align: center;
  }

  .card__date {
    flex: 1;
    color: #666;
    font-size: 15px;
    font-style: italic;
    white-space: nowrap;
  }

  .version {
    width: 34px;
    height: 25px;
    border-radius: 4px;
    background: var(--pale);
    text-align: center;
  }

  /* File previews */
  .bill {
    fill: #111;
    font-family: "Liberation Serif", serif;
    font-size: 11px;
  }

  .bill--head {
    font-weight: 700;
    text-decoration: underline;
  }

  .line {
    fill: #111;
    font-family: "Liberation Sans", sans-serif;
    font-size: 12px;
  }

  .line--bold {
    font-weight: 700;
  }

  .line--italic {
    font-style: italic;
  }

  .tag {
    fill: #fff;
    font-size: 9px;
    font-weight: 700;
    text-anchor: middle;
  }

  .tag--pdf {
    font-size: 5px;
  }

  /* Context menu */
  .menu {
    position: absolute;
    z-index: 1;
    top: 58px;
    left: 55px;
    box-sizing: border-box;
    width: 225px;
    overflow: hidden;
    border: 1px solid var(--line);
    border-radius: 4px;
    background: #fff;
    box-shadow: 0 6px 12px rgba(0, 0, 0, 0.2);
    font-size: 17px;
  }

  .menu__group + .menu__group {
    border-top: 1px solid var(--line);
  }

  .menu__item {
    display: flex;
    align-items: center;
    gap: 14px;
    width: 100%;
    height: 50px;
    padding: 0 0 2px 19px;
    color: #212529;
    white-space: nowrap;
  }

  .menu__icon {
    height: 20px;
    margin-top: 4px;
    color: #000;
  }

  .menu__item--hover {
    background: #f1f1f1;
  }

  .menu__item--danger,
  .menu__item--danger .menu__icon {
    color: #f00;
  }

  /* Tutorial marks */
  .mark {
    position: absolute;
    box-sizing: border-box;
    border: 4px solid #ff8400;
    pointer-events: none;
  }

  .mark--button {
    top: 9px;
    left: 241px;
    width: 52px;
    height: 49px;
  }

  .mark--item {
    top: 5px;
    left: 6px;
    width: 190px;
    height: 41px;
  }

  .step {
    position: absolute;
    z-index: 2;
    left: 257px;
    width: 30px;
    height: 30px;
    border-radius: 50%;
    background: #ff8400;
    color: #fff;
    font-family: "Open Sans", sans-serif;
    font-size: 16px;
    line-height: 30px;
    text-align: center;
  }

  .step--one {
    top: -30px;
  }

  .step--two {
    top: 70px;
  }

  .card .arrow {
    position: absolute;
    top: -90px;
    left: 300px;
    width: 66px;
    height: 84px;
  }

  .help {
    position: fixed;
    right: 25px;
    bottom: 88px;
    width: 62px;
    height: 62px;
    border-radius: 50%;
    background: #0064cb;
    box-shadow: 2px 2px 8px rgba(0, 0, 0, 0.15);
  }
</style>
